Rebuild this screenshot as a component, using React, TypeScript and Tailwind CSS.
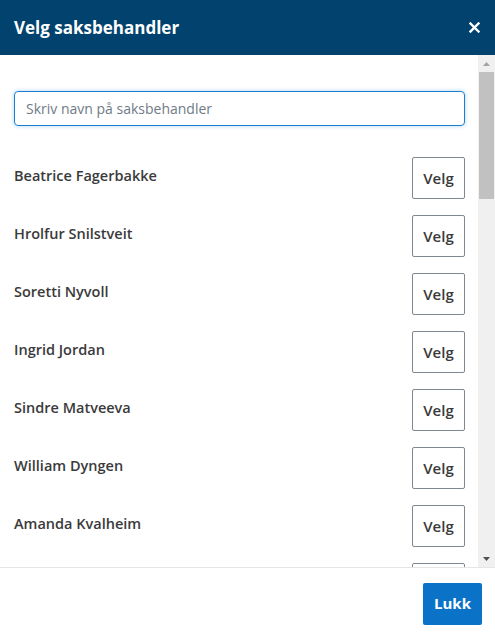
import React from 'react';

const SAKSBEHANDLERE = [
  'Beatrice Fagerbakke',
  'Hrolfur Snilstveit',
  'Soretti Nyvoll',
  'Ingrid Jordan',
  'Sindre Matveeva',
  'William Dyngen',
  'Amanda Kvalheim',
  'Knut Berge',
];

export default function App() {
  return (
    <div
      className="flex h-[639px] w-[495px] flex-col bg-white"
      style={{ fontFamily: '"Open Sans", "Noto Sans", sans-serif' }}
    >
      {/* Header */}
      <div className="flex h-[55px] shrink-0 items-center justify-between bg-[#01426e] pl-[14px] pr-[15px]">
        <h1 className="text-[17px] font-bold text-white">Velg saksbehandler</h1>
        <button type="button" aria-label="Lukk" className="text-white">
          <svg width="11" height="11" viewBox="0 0 11 11">
            <path d="M1.5 1.5 L9.5 9.5 M9.5 1.5 L1.5 9.5" stroke="white" strokeWidth="2.4" strokeLinecap="square" />
          </svg>
        </button>
      </div>

      {/* Body */}
      <div className="flex h-[512px] shrink-0">
        <div className="flex-1 overflow-hidden pl-[14px] pr-[13px] pt-[36px]">
          <input
            type="text"
            placeholder="Skriv navn på saksbehandler"
            className="h-[35px] w-full rounded-[4px] border border-[#1a7fd0] px-[11px] text-[14px] text-[#333] shadow-[0_0_4px_rgba(26,127,208,0.35)] outline-none placeholder:text-[#6f7b86]"
          />
          <div className="mt-[31px] flex flex-col gap-[16px]">
            {SAKSBEHANDLERE.map((navn) => (
              <div key={navn} className="flex h-[42px] items-center justify-between">
                <span className="-mt-[5px] text-[14.5px] font-semibold text-[#3a3a3a]">{navn}</span>
                <button
                  type="button"
                  className="h-[42px] w-[53px] rounded-[2px] border border-[#7f8891] text-[15px] font-semibold text-[#3a3a3a]"
                >
                  Velg
                </button>
              </div>
            ))}
          </div>
        </div>

        {/* Scrollbar */}
        <div className="flex w-[17px] flex-col bg-[#f0f0f0]">
          <div className="flex h-[17px] items-center justify-center">
            <svg width="7" height="4" viewBox="0 0 7 4">
              <path d="M0 4 L3.5 0 L7 4 Z" fill="#a3a3a3" />
            </svg>
          </div>
          <div className="mx-[1px] h-[127px] bg-[#c1c1c1]" />
          <div className="flex-1" />
          <div className="flex h-[17px] items-center justify-center">
            <svg width="7" height="4" viewBox="0 0 7 4">
              <path d="M0 0 L7 0 L3.5 4 Z" fill="#505050" />
            </svg>
          </div>
        </div>
      </div>

      {/* Footer */}
      <div className="flex flex-1 items-center justify-end border-t border-[#e5e5e5] pr-[13px]">
        <button
          type="button"
          className="h-[42px] w-[59px] rounded-[2px] bg-[#0a72c7] text-[15px] font-bold text-white"
        >
          Lukk
        </button>
      </div>
    </div>
  );
}
